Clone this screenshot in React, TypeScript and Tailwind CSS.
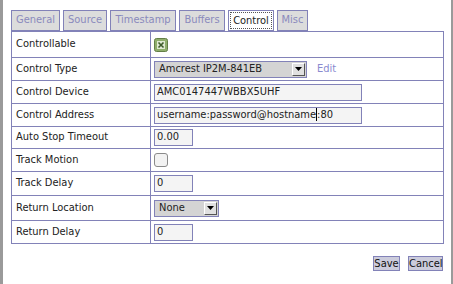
import React from "react";

const font = { fontFamily: '"DejaVu Sans", Verdana, sans-serif' };

function Tab({ label, w, active }: { label: string; w: number; active?: boolean }) {
  return (
    <div
      className={
        "flex h-[21px] items-center justify-center border border-[#8282b8] text-[11px] " +
        (active ? "bg-white text-[#222]" : "bg-[#dcdcdc] text-[#8a8abd]")
      }
      style={{ width: w }}
    >
      {active ? (
        <span className="border border-dotted border-[#555] px-[2px] leading-[15px]">{label}</span>
      ) : (
        label
      )}
    </div>
  );
}

function Input({ children, w }: { children: React.ReactNode; w: number }) {
  return (
    <div
      className="flex h-[17px] items-center border border-[#8282b8] bg-[#f4f4f4] pl-[2px] text-[11px] text-[#222]"
      style={{ width: w }}
    >
      {children}
    </div>
  );
}

function Select({ value, w }: { value: string; w: number }) {
  return (
    <div
      className="flex h-[17px] items-center justify-between border border-[#8282b8] bg-[#d4d4d4] pl-[4px] pr-[1px] text-[11px] text-[#222]"
      style={{ width: w }}
    >
      <span>{value}</span>
      <div className="flex h-[13px] w-[13px] items-center justify-center border border-t-white border-l-white border-r-[#555] border-b-[#555] bg-[#e0e0e0]">
        <svg width="7" height="4" viewBox="0 0 7 4">
          <path d="M0 0H7L3.5 4Z" fill="#000" />
        </svg>
      </div>
    </div>
  );
}

const rows: { label: string; h: number; content: React.ReactNode }[] = [
  {
    label: "Controllable",
    h: 26,
    content: (
      <svg width="14" height="14" viewBox="0 0 14 14">
        <rect x="0.5" y="0.5" width="13" height="13" rx="2" fill="#8fae6c" stroke="#647f47" />
        <rect x="3" y="3" width="8" height="8" fill="#dfe9d2" />
        <path d="M4.5 4.5L9.5 9.5M9.5 4.5L4.5 9.5" stroke="#3d5a2a" strokeWidth="1.6" />
      </svg>
    ),
  },
  {
    label: "Control Type",
    h: 23,
    content: (
      <div className="flex items-center">
        <Select value="Amcrest IP2M-841EB" w={153} />
        <span className="ml-[10px] text-[11px] text-[#8a8acf]">Edit</span>
      </div>
    ),
  },
  { label: "Control Device", h: 23, content: <Input w={208}>AMC0147447WBBX5UHF</Input> },
  {
    label: "Control Address",
    h: 23,
    content: (
      <Input w={208}>
        <span>
          username:password@hostname<span className="border-l border-black" />:80
        </span>
      </Input>
    ),
  },
  { label: "Auto Stop Timeout", h: 22, content: <Input w={39}>0.00</Input> },
  {
    label: "Track Motion",
    h: 23,
    content: <div className="h-[14px] w-[14px] rounded-[3px] border border-[#8a8a8a] bg-[#f2f2f2]" />,
  },
  { label: "Track Delay", h: 24, content: <Input w={39}>0</Input> },
  { label: "Return Location", h: 25, content: <Select value="None" w={65} /> },
  { label: "Return Delay", h: 23, content: <Input w={39}>0</Input> },
];

export default function App() {
  return (
    <div className="flex h-[284px] w-[453px] bg-white font-stretch-condensed" style={font}>
      <div className="h-full w-[3px] bg-[#9a9a9a]" />
      <div className="flex w-[448px] flex-col pl-[8px] pt-[10px]">
        <div className="flex gap-[3px]">
          <Tab label="General" w={49} />
          <Tab label="Source" w={44} />
          <Tab label="Timestamp" w={66} />
          <Tab label="Buffers" w={46} />
          <Tab label="Control" w={46} active />
          <Tab label="Misc" w={31} />
        </div>
        <div className="w-[433px] border border-t-0 border-[#8282b8]">
          {rows.map((r) => (
            <div key={r.label} className="flex border-t border-[#8282b8]" style={{ height: r.h }}>
              <div className="flex w-[139px] items-center border-r border-[#8282b8] pl-[4px] text-[11px] text-[#222]">
                {r.label}
              </div>
              <div className="flex flex-1 items-center pl-[3px]">{r.content}</div>
            </div>
          ))}
        </div>
        <div className="mt-[12px] flex w-[433px] justify-end gap-[8px] pr-[1px]">
          <button className="h-[15px] w-[27px] border border-[#8282b8] bg-[#ccccdc] text-[11px] leading-[13px] text-[#111]">
            Save
          </button>
          <button className="h-[15px] w-[35px] border border-[#8282b8] bg-[#ccccdc] text-[11px] leading-[13px] text-[#111]">
            Cancel
          </button>
        </div>
      </div>
      <div className="h-full w-[2px] bg-[#9a9a9a]" />
    </div>
  );
}
